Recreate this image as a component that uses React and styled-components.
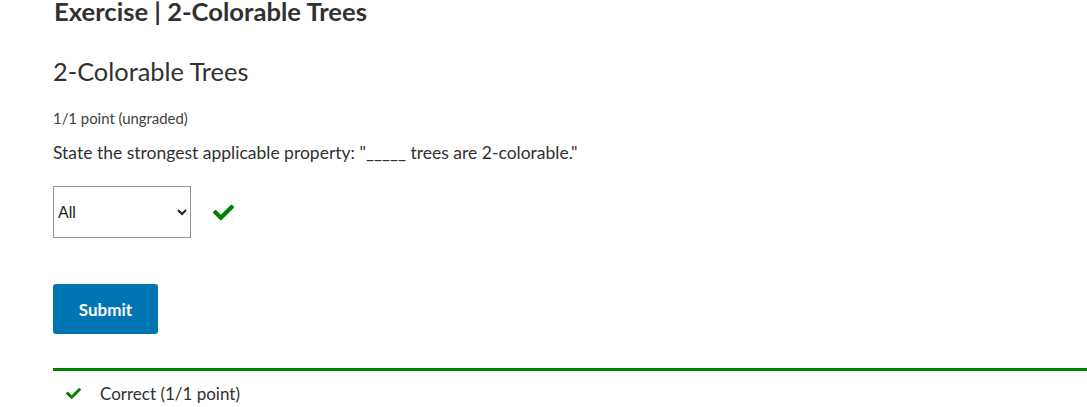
import React from "react";
import styled, { createGlobalStyle } from "styled-components";
import { FaCheck } from "react-icons/fa";

const Global = createGlobalStyle`
  html, body { margin: 0; padding: 0; background: #fff; }
  body { font-family: Lato, "Open Sans", sans-serif; color: #454545; }
`;

const Page = styled.div`
  padding: 0 0 0 53px;
  display: flex;
  flex-direction: column;
`;

const Title = styled.h2`
  margin: -5px 0 0 1px;
  font-size: 25.6px;
  font-weight: 700;
  line-height: 32px;
  color: #313131;
`;

const ProblemTitle = styled.h3`
  margin: 29px 0 0 0;
  font-size: 25.4px;
  font-weight: 400;
  line-height: 30px;
  color: #313131;
`;

const Points = styled.div`
  margin-top: 22px;
  font-size: 14.9px;
  line-height: 20px;
  color: #414141;
`;

const Prompt = styled.p`
  margin: 13px 0 0 0;
  font-size: 17.5px;
  line-height: 24px;
  color: #313131;
`;

const AnswerRow = styled.div`
  margin-top: 21px;
  display: flex;
  align-items: center;
  gap: 22px;
`;

const Select = styled.select`
  width: 138px;
  height: 52px;
  box-sizing: border-box;
  border: 1px solid #8b9aa6;
  border-radius: 0;
  background: #fff;
  font-family: "Liberation Sans", Arial, sans-serif;
  font-size: 16px;
  color: #222;
  padding: 0 2px 0 0;
`;

const Mark = styled.span`
  display: inline-flex;
  color: #008100;
  font-size: ${(p) => p.$size}px;
`;

const SubmitButton = styled.button`
  margin-top: 46px;
  align-self: flex-start;
  width: 105px;
  height: 50px;
  border: none;
  border-radius: 3px;
  background: #0075b4;
  color: #fff;
  font-family: Lato, "Open Sans", sans-serif;
  font-weight: 700;
  font-size: 17px;
`;

const Feedback = styled.div`
  margin-top: 34px;
  border-top: 3px solid #008100;
  padding: 12px 0 0 13px;
  display: flex;
  align-items: center;
  gap: 19px;
  font-size: 17px;
  color: #313131;
`;

export default function App() {
  return (
    <>
      <Global />
      <Page>
        <Title>Exercise | 2-Colorable Trees</Title>
        <ProblemTitle>2-Colorable Trees</ProblemTitle>
        <Points>1/1 point (ungraded)</Points>
        <Prompt>State the strongest applicable property: "_____ trees are 2-colorable."</Prompt>
        <AnswerRow>
          <Select defaultValue="All">
            <option>All</option>
            <option>No</option>
            <option>Some</option>
          </Select>
          <Mark $size={21}><FaCheck /></Mark>
        </AnswerRow>
        <SubmitButton>Submit</SubmitButton>
        <Feedback>
          <Mark $size={15}><FaCheck /></Mark>
          <span>Correct (1/1 point)</span>
        </Feedback>
      </Page>
    </>
  );
}
